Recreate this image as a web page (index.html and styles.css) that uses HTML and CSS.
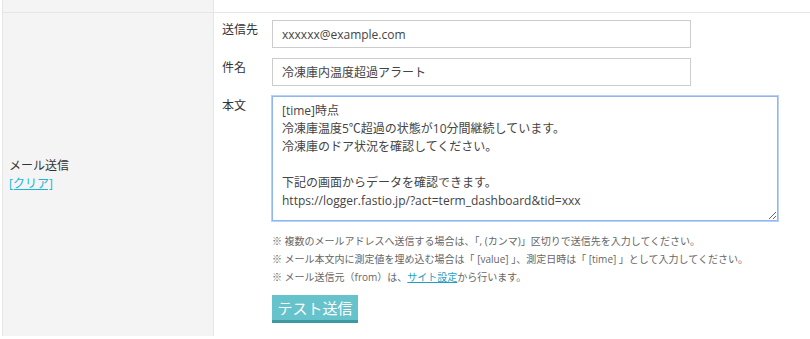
FILE: index.html
```html
<!doctype html>
<html>

<head>
  <meta charset="utf-8">
  <title>メール送信設定</title>
  <link rel="stylesheet" href="styles.css">
</head>

<body>
  <table class="setting-table">
    <tr class="row-prev">
      <th></th>
      <td></td>
    </tr>
    <tr>
      <th>
        メール送信<br>
        <a href="#" class="clear-link">[クリア]</a>
      </th>
      <td>
        <div class="mail-form">
          <label class="field-label">送信先</label>
          <input class="text-input" type="text" value="xxxxxx@example.com">

          <label class="field-label">件名</label>
          <input class="text-input" type="text" value="冷凍庫内温度超過アラート">

          <label class="field-label">本文</label>
          <textarea class="body-input">[time]時点
冷凍庫温度5℃超過の状態が10分間継続しています。
冷凍庫のドア状況を確認してください。

下記の画面からデータを確認できます。
https://logger.fastio.jp/?act=term_dashboard&amp;tid=xxx</textarea>
        </div>

        <ul class="notes">
          <li>※ 複数のメールアドレスへ送信する場合は、「, (カンマ)」区切りで送信先を入力してください。</li>
          <li>※ メール本文内に測定値を埋め込む場合は「 [value] 」、測定日時は「 [time] 」として入力してください。</li>
          <li>※ メール送信元（from）は、<a href="#" class="site-link">サイト設定</a>から行います。</li>
        </ul>

        <button class="test-btn">テスト送信</button>
      </td>
    </tr>
  </table>
</body>

</html>
```

FILE: styles.css
```css
body {
  margin: 0;
  background-color: #fff;
  font-family: "Open Sans", "Noto Sans CJK JP", sans-serif;
  color: #333;
}

.setting-table {
  margin-left: 2px;
  width: 808px;
  table-layout: fixed;
  border-collapse: collapse;
  border-left: 1px solid #e6e6e6;
}

.setting-table th {
  width: 210px;
  background-color: #f4f4f4;
  border-right: 1px solid #e6e6e6;
  text-align: left;
  font-weight: normal;
  font-size: 12px;
  line-height: 18px;
  padding: 0 0 0 6px;
  vertical-align: middle;
}

.setting-table td {
  padding: 7px 8px 13px 8px;
  vertical-align: top;
}

.row-prev th,
.row-prev td {
  height: 12px;
  padding: 0;
  border-bottom: 1px solid #e6e6e6;
}

.clear-link {
  color: #1bb4d6;
}

.mail-form {
  display: grid;
  grid-template-columns: 50px auto;
  row-gap: 10px;
  align-items: start;
}

.field-label {
  font-size: 12px;
  line-height: 18px;
  padding-top: 1px;
}

.text-input {
  width: 419px;
  height: 28px;
  box-sizing: border-box;
  border: 1px solid #cccccc;
  padding: 0 9px;
  font-family: inherit;
  font-size: 12px;
  color: #444;
}

.body-input {
  width: 506px;
  height: 125px;
  box-sizing: border-box;
  border: 1px solid #8fb5f2;
  outline: 1px solid #b9d1f7;
  padding: 5px 9px 4px;
  font-family: inherit;
  font-size: 12px;
  line-height: 18px;
  color: #444;
  resize: both;
}

.notes {
  list-style-type: none;
  margin: 11px 0 0 50px;
  padding: 0;
  font-size: 10px;
  line-height: 18px;
  color: #666;
}

.site-link {
  color: #1f9fc4;
}

.test-btn {
  margin: 9px 0 0 50px;
  width: 86px;
  height: 28px;
  border: none;
  border-bottom: 3px solid #3e9aa2;
  background-color: #66c2cb;
  color: #fff;
  font-family: inherit;
  font-size: 15px;
  padding: 0;
}
```
